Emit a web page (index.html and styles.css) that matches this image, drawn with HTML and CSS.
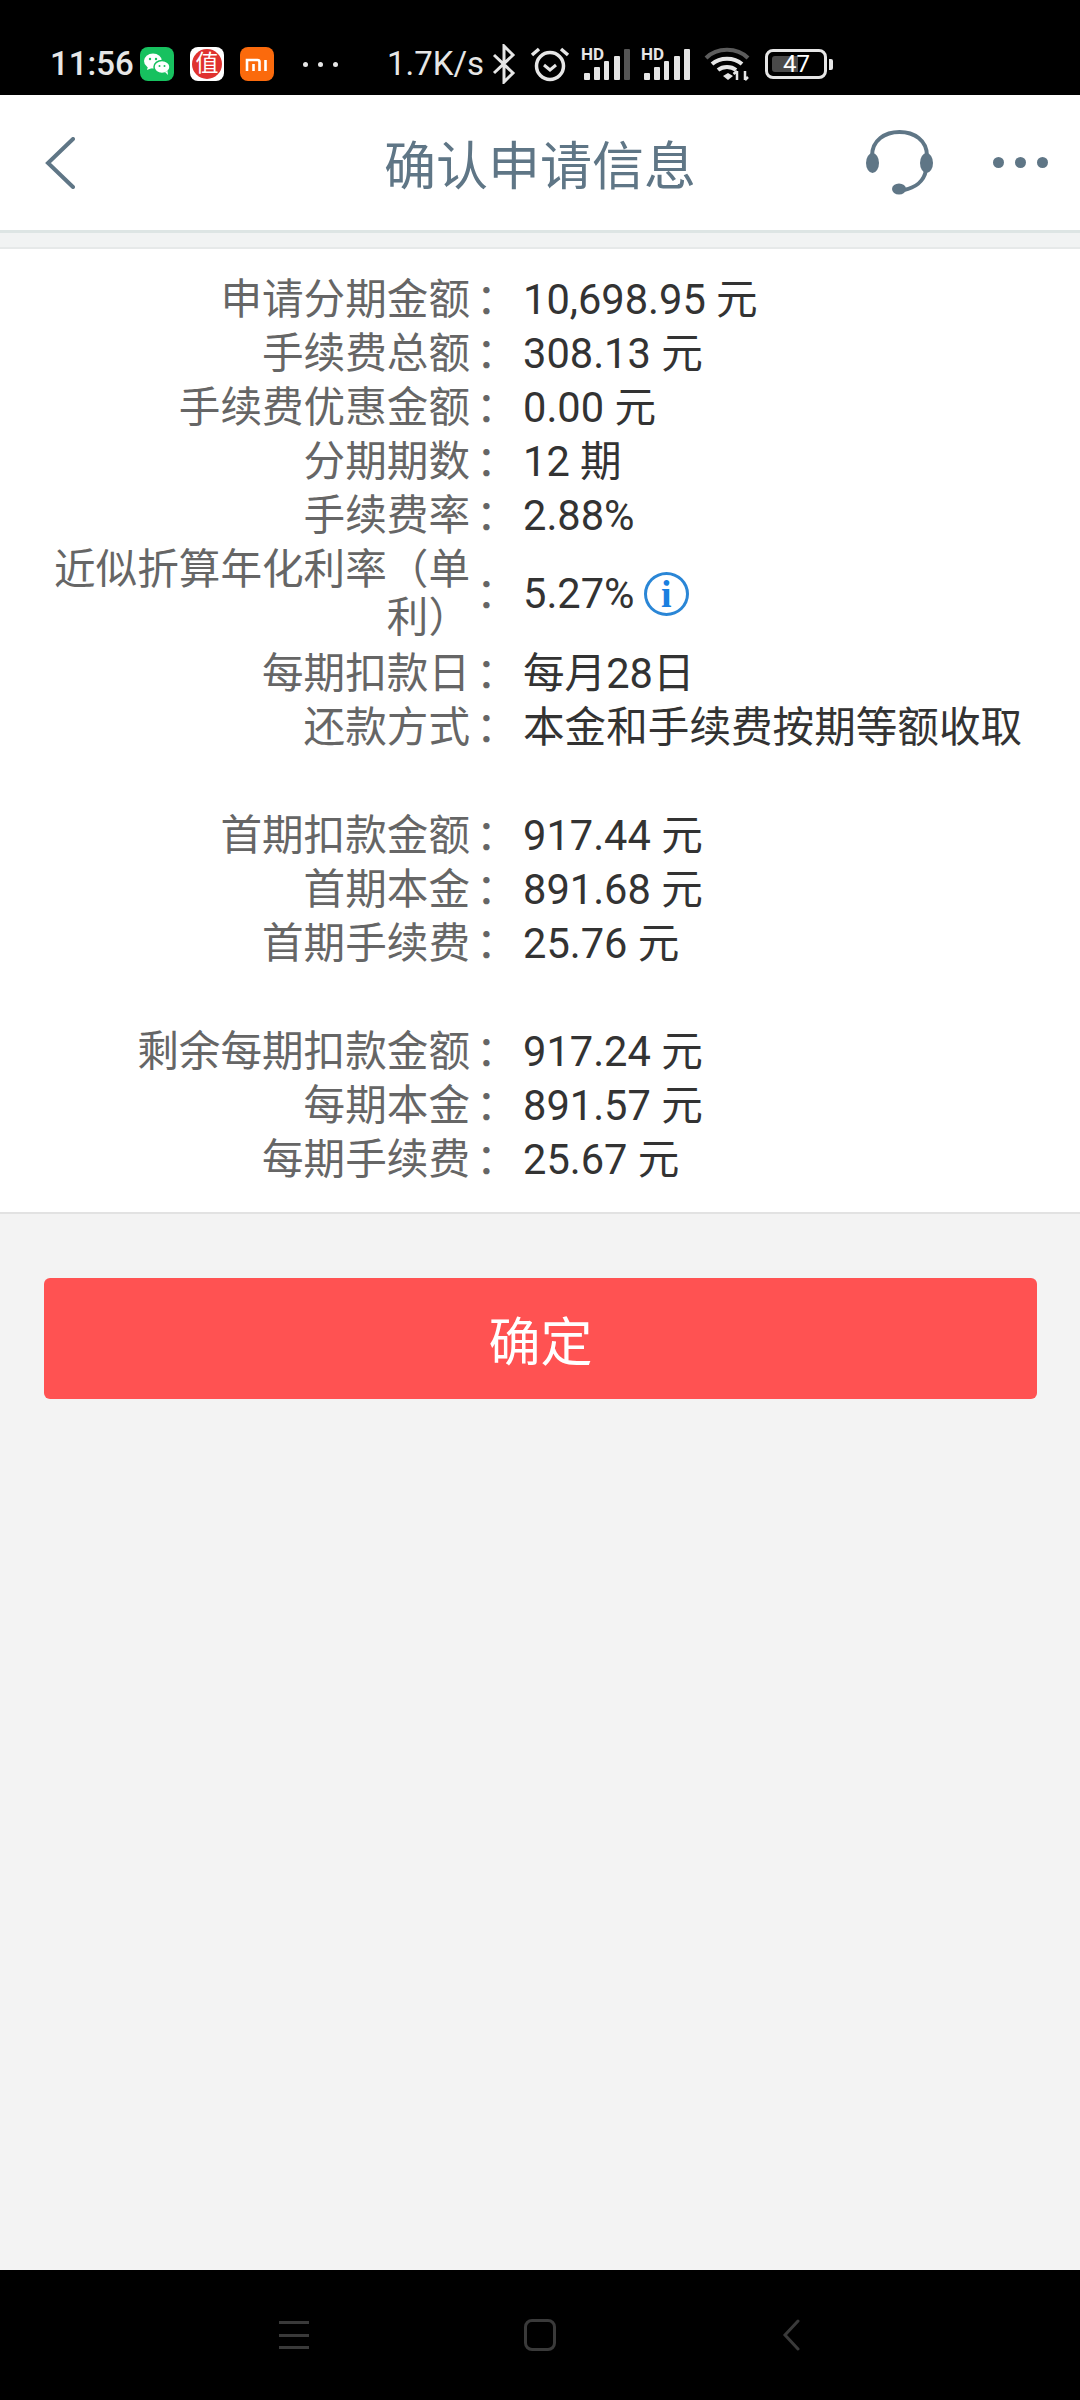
FILE: index.html
```html
<!DOCTYPE html>
<html lang="zh-CN">
<head>
    <meta charset="UTF-8">
    <meta name="viewport" content="width=device-width, initial-scale=1.0">
    <title>确认申请信息</title>
    <link rel="stylesheet" href="styles.css">
</head>
<body>
    <div class="status-bar">
        <span class="time">11:56</span>
        <span class="app-icon wechat">
            <svg width="34" height="34" viewBox="0 0 34 34">
                <ellipse cx="13" cy="14" rx="9" ry="7.5" fill="#fff"/>
                <path d="M8 19l-1 4 5-2z" fill="#fff"/>
                <ellipse cx="22" cy="20" rx="8" ry="6.5" fill="#fff" stroke="#17c15f" stroke-width="1.5"/>
                <path d="M25 25l3 3-.5-4z" fill="#fff"/>
                <circle cx="10" cy="12" r="1.2" fill="#17c15f"/>
                <circle cx="16" cy="12" r="1.2" fill="#17c15f"/>
                <circle cx="19.5" cy="19" r="1" fill="#17c15f"/>
                <circle cx="24.5" cy="19" r="1" fill="#17c15f"/>
            </svg>
        </span>
        <span class="app-icon zhi"><span class="zhi-badge">值</span></span>
        <span class="app-icon mi">
            <svg width="34" height="34" viewBox="0 0 34 34" fill="none" stroke="#fff" stroke-width="2.6">
                <path d="M7 24V13h10.500a2 2 0 0 1 2 2v9M13.500 17v7M25.500 13v11"/>
            </svg>
        </span>
        <span class="more-dots"><i></i><i></i><i></i></span>
        <span class="speed">1.7K/s</span>
        <svg class="bt" width="24" height="40" viewBox="0 0 24 40" fill="none" stroke="#e6e6e6" stroke-width="3">
            <path d="M2 11l19 18-9 9V2l9 9L2 29"/>
        </svg>
        <svg class="alarm" width="40" height="36" viewBox="0 0 40 36" fill="none" stroke="#e6e6e6">
            <circle cx="20" cy="20" r="13.500" stroke-width="3.500"/>
            <path d="M14 19l6 5 6-5" stroke-width="3"/>
            <path d="M2 9l7-6M38 9l-7-6" stroke-width="3.500"/>
        </svg>
        <span class="signal">
            <span class="hd">HD</span>
            <svg width="50" height="32" viewBox="0 0 50 32" fill="#e6e6e6">
                <rect x="3" y="25" width="6" height="7" rx="1"/>
                <rect x="13" y="19" width="6" height="13" rx="1"/>
                <rect x="23" y="13" width="5" height="19" rx="1"/>
                <rect x="33" y="8" width="6" height="24" rx="1"/>
                <rect x="43" y="1" width="6" height="31" rx="1" fill="#555"/>
            </svg>
        </span>
        <span class="signal">
            <span class="hd">HD</span>
            <svg width="50" height="32" viewBox="0 0 50 32" fill="#e6e6e6">
                <rect x="3" y="25" width="6" height="7" rx="1"/>
                <rect x="13" y="19" width="6" height="13" rx="1"/>
                <rect x="23" y="13" width="5" height="19" rx="1"/>
                <rect x="33" y="8" width="6" height="24" rx="1"/>
                <rect x="43" y="1" width="6" height="31" rx="1"/>
            </svg>
        </span>
        <svg class="wifi" width="46" height="34" viewBox="0 0 46 34" fill="none">
            <path d="M2 11C13 0 33 0 44 11" stroke="#5c5c5c" stroke-width="4"/>
            <path d="M8 17c8-7 22-7 30 0" stroke="#e6e6e6" stroke-width="4"/>
            <path d="M14 23c5-4 13-4 18 0" stroke="#e6e6e6" stroke-width="4"/>
            <path d="M19 29l5-3 5 3-5 4z" fill="#e6e6e6"/>
            <path d="M33 24v9M29.500 27l3.500-3M41 33v-9M44 30l-3 3" stroke="#e6e6e6" stroke-width="2.500"/>
        </svg>
        <span class="battery"><span class="battery-fill"></span><span class="battery-num">47</span></span>
        <span class="battery-tip"></span>
    </div>

    <header class="top-bar">
        <svg class="back" width="30" height="52" viewBox="0 0 30 52" fill="none" stroke="#5f7686" stroke-width="4" stroke-linecap="round">
            <path d="M28 2L3 26l25 24"/>
        </svg>
        <h1>确认申请信息</h1>
        <svg class="headset" width="68" height="66" viewBox="0 0 68 66" fill="#5f7686">
            <path d="M6 26C6 10 19 2 33.500 2S61 10 61 26" fill="none" stroke="#5f7686" stroke-width="4"/>
            <ellipse cx="6.500" cy="33" rx="6.500" ry="10"/>
            <ellipse cx="60.500" cy="33" rx="6.500" ry="10"/>
            <path d="M60 40C58 52 48 58 38 60" fill="none" stroke="#5f7686" stroke-width="4"/>
            <ellipse cx="33" cy="59" rx="7" ry="5.500"/>
        </svg>
        <span class="top-dots"><i></i><i></i><i></i></span>
    </header>
    <div class="strip"></div>

    <section class="details">
        <div class="row"><div class="label">申请分期金额</div><div class="colon">：</div><div class="value">10,698.95 元</div></div>
        <div class="row"><div class="label">手续费总额</div><div class="colon">：</div><div class="value">308.13 元</div></div>
        <div class="row"><div class="label">手续费优惠金额</div><div class="colon">：</div><div class="value">0.00 元</div></div>
        <div class="row"><div class="label">分期期数</div><div class="colon">：</div><div class="value">12 期</div></div>
        <div class="row"><div class="label">手续费率</div><div class="colon">：</div><div class="value">2.88%</div></div>
        <div class="row tall"><div class="label">近似折算年化利率（单利）</div><div class="colon">：</div><div class="value">5.27% <span class="info">i</span></div></div>
        <div class="row"><div class="label">每期扣款日</div><div class="colon">：</div><div class="value">每月28日</div></div>
        <div class="row"><div class="label">还款方式</div><div class="colon">：</div><div class="value">本金和手续费按期等额收取</div></div>
        <div class="row blank"></div>
        <div class="row"><div class="label">首期扣款金额</div><div class="colon">：</div><div class="value">917.44 元</div></div>
        <div class="row"><div class="label">首期本金</div><div class="colon">：</div><div class="value">891.68 元</div></div>
        <div class="row"><div class="label">首期手续费</div><div class="colon">：</div><div class="value">25.76 元</div></div>
        <div class="row blank"></div>
        <div class="row"><div class="label">剩余每期扣款金额</div><div class="colon">：</div><div class="value">917.24 元</div></div>
        <div class="row"><div class="label">每期本金</div><div class="colon">：</div><div class="value">891.57 元</div></div>
        <div class="row"><div class="label">每期手续费</div><div class="colon">：</div><div class="value">25.67 元</div></div>
    </section>

    <main class="actions">
        <button class="confirm">确定</button>
    </main>

    <nav class="nav-bar">
        <span class="nav-menu"><i></i><i></i><i></i></span>
        <span class="nav-home"></span>
        <svg width="18" height="32" viewBox="0 0 18 32" fill="none" stroke="#3a3a3a" stroke-width="3" stroke-linecap="round">
            <path d="M16 2L3 16l13 14"/>
        </svg>
    </nav>
</body>
</html>
```

FILE: styles.css
```css
/* Basic styles */
html, body {
    height: 100%;
}
body {
    margin: 0;
    display: flex;
    flex-direction: column;
    font-family: Roboto, "Noto Sans CJK SC", sans-serif;
    background-color: #f3f3f3;
    color: #333;
}
i {
    display: block;
}

/* Status bar */
.status-bar {
    height: 95px;
    box-sizing: border-box;
    padding: 47px 0 0 50px;
    display: flex;
    align-items: flex-start;
    background-color: #000;
    color: #e6e6e6;
    flex: none;
}
.time {
    width: 90px;
    font-size: 33px;
    line-height: 34px;
    font-weight: 500;
}
.app-icon {
    width: 34px;
    height: 34px;
    border-radius: 8px;
    margin-right: 16px;
    overflow: hidden;
    display: flex;
    align-items: center;
    justify-content: center;
}
.wechat { background-color: #17c15f; }
.mi { background-color: #fb6a0c; }
.zhi { background-color: #fff; }
.zhi-badge {
    width: 30px;
    height: 30px;
    border-radius: 50%;
    background-color: #e0322f;
    color: #fff;
    font-size: 23px;
    line-height: 30px;
    text-align: center;
}
.more-dots {
    width: 35px;
    height: 34px;
    margin: 0 49px 0 13px;
    display: flex;
    justify-content: space-between;
    align-items: center;
}
.more-dots i {
    width: 5px;
    height: 5px;
    border-radius: 50%;
    background-color: #e6e6e6;
}
.speed {
    width: 105px;
    font-size: 33px;
    line-height: 34px;
}
.bt { margin: -3px 14px 0 0; }
.alarm { margin: -1px 11px 0 0; }
.signal {
    position: relative;
    width: 50px;
    height: 32px;
    margin: 1px 10px 0 0;
}
.hd {
    position: absolute;
    left: 0;
    top: -2px;
    font-size: 17px;
    line-height: 17px;
    font-weight: 700;
    color: #e6e6e6;
}
.wifi { margin: 0 15px 0 3px; }
.battery {
    position: relative;
    width: 62px;
    height: 30px;
    box-sizing: border-box;
    margin-top: 2px;
    border: 3px solid #e6e6e6;
    border-radius: 8px;
}
.battery-fill {
    position: absolute;
    left: 4px;
    top: 4px;
    bottom: 4px;
    width: 26px;
    border-radius: 3px 0 0 3px;
    background-color: #4a4a4a;
}
.battery-num {
    position: absolute;
    left: 15px;
    top: 0;
    font-size: 24px;
    line-height: 25px;
    color: #fff;
}
.battery-tip {
    width: 4px;
    height: 11px;
    margin: 12px 0 0 2px;
    border-radius: 0 2px 2px 0;
    background-color: #e6e6e6;
}

/* Header */
.top-bar {
    height: 135px;
    padding: 0 32px 0 45px;
    display: flex;
    align-items: center;
    position: relative;
    background-color: #fff;
    flex: none;
}
.top-bar h1 {
    position: absolute;
    left: 0;
    right: 0;
    margin: 0;
    text-align: center;
    font-size: 52px;
    font-weight: 400;
    color: #5f7686;
}
.headset {
    margin: 0 59px 0 auto;
    position: relative;
}
.top-dots {
    width: 55px;
    display: flex;
    justify-content: space-between;
    position: relative;
}
.top-dots i {
    width: 11px;
    height: 11px;
    border-radius: 50%;
    background-color: #5f7686;
}
.strip {
    height: 14px;
    border-top: 3px solid #dde5e4;
    border-bottom: 2px solid #e6e9e9;
    background-color: #f1f3f3;
    flex: none;
}

/* Detail rows */
.details {
    padding: 24px 0 25px;
    background-color: #fff;
    border-bottom: 2px solid #e2e2e2;
    flex: none;
}
.row {
    display: grid;
    grid-template-columns: 476px 47px 1fr;
    min-height: 54px;
    font-size: 41.6px;
    line-height: 48px;
    padding: 3px 0;
    box-sizing: border-box;
    align-items: center;
}
.row.tall {
    padding: 3px 0 5px;
}
.label {
    padding: 0 6px 0 48px;
    text-align: right;
    color: #666;
}
.colon {
    color: #666;
}
.value {
    display: flex;
    align-items: center;
    color: #333;
    white-space: pre;
}
.info {
    width: 45px;
    height: 44px;
    box-sizing: border-box;
    border: 3px solid #2a86d6;
    border-radius: 50%;
    margin-left: -1px;
    color: #1a7fe0;
    font-family: "Liberation Serif", serif;
    font-weight: 700;
    font-size: 38px;
    line-height: 38px;
    text-align: center;
}

/* Confirm button */
.actions {
    flex: 1;
    padding: 64px 43px 0 44px;
}
.confirm {
    display: block;
    width: 100%;
    height: 121px;
    border: 0;
    border-radius: 6px;
    background-color: #ff5252;
    color: #fff;
    font-family: inherit;
    font-size: 52px;
}

/* Navigation */
.nav-bar {
    height: 130px;
    box-sizing: border-box;
    padding: 49px 0 0 279px;
    display: flex;
    align-items: flex-start;
    background-color: #000;
    flex: none;
}
.nav-menu {
    width: 30px;
    height: 28px;
    margin: 2px 215px 0 0;
    display: flex;
    flex-direction: column;
    justify-content: space-between;
}
.nav-menu i {
    height: 3px;
    background-color: #3a3a3a;
}
.nav-home {
    width: 32px;
    height: 32px;
    box-sizing: border-box;
    margin-right: 226px;
    border: 3px solid #3a3a3a;
    border-radius: 8px;
}
```
